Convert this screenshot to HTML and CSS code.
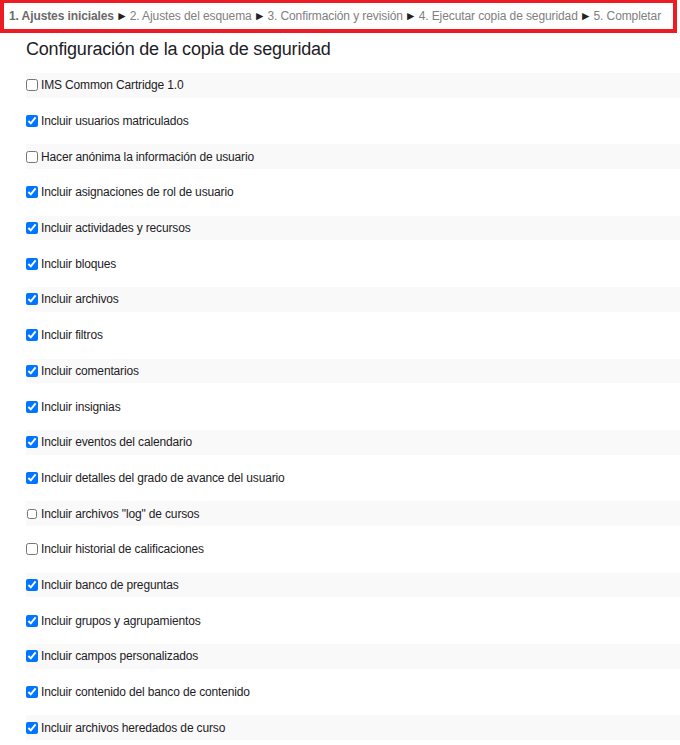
FILE: index.html
```html
<!DOCTYPE html>
<html lang="es">
<head>
<meta charset="utf-8">
<title>Copia de seguridad</title>
<link rel="stylesheet" href="styles.css">
</head>
<body>
<nav class="steps">
  <span class="step current">1. Ajustes iniciales</span>
  <span class="sep">►</span>
  <span class="step">2. Ajustes del esquema</span>
  <span class="sep">►</span>
  <span class="step">3. Confirmación y revisión</span>
  <span class="sep">►</span>
  <span class="step">4. Ejecutar copia de seguridad</span>
  <span class="sep">►</span>
  <span class="step">5. Completar</span>
</nav>
<main class="content">
  <h2 class="title">Configuración de la copia de seguridad</h2>
  <div class="settings">
    <label class="row"><input type="checkbox"><span>IMS Common Cartridge 1.0</span></label>
    <label class="row"><input type="checkbox" checked><span>Incluir usuarios matriculados</span></label>
    <label class="row"><input type="checkbox"><span>Hacer anónima la información de usuario</span></label>
    <label class="row"><input type="checkbox" checked><span>Incluir asignaciones de rol de usuario</span></label>
    <label class="row"><input type="checkbox" checked><span>Incluir actividades y recursos</span></label>
    <label class="row"><input type="checkbox" checked><span>Incluir bloques</span></label>
    <label class="row"><input type="checkbox" checked><span>Incluir archivos</span></label>
    <label class="row"><input type="checkbox" checked><span>Incluir filtros</span></label>
    <label class="row"><input type="checkbox" checked><span>Incluir comentarios</span></label>
    <label class="row"><input type="checkbox" checked><span>Incluir insignias</span></label>
    <label class="row"><input type="checkbox" checked><span>Incluir eventos del calendario</span></label>
    <label class="row"><input type="checkbox" checked><span>Incluir detalles del grado de avance del usuario</span></label>
    <label class="row"><input type="checkbox" class="small"><span>Incluir archivos "log" de cursos</span></label>
    <label class="row"><input type="checkbox"><span>Incluir historial de calificaciones</span></label>
    <label class="row"><input type="checkbox" checked><span>Incluir banco de preguntas</span></label>
    <label class="row"><input type="checkbox" checked><span>Incluir grupos y agrupamientos</span></label>
    <label class="row"><input type="checkbox" checked><span>Incluir campos personalizados</span></label>
    <label class="row"><input type="checkbox" checked><span>Incluir contenido del banco de contenido</span></label>
    <label class="row"><input type="checkbox" checked><span>Incluir archivos heredados de curso</span></label>
  </div>
</main>
</body>
</html>
```
FILE: styles.css
```css
html, body {
  margin: 0;
  padding: 0;
  background: #ffffff;
  font-family: "Liberation Sans", Arial, sans-serif;
}

.steps {
  box-sizing: border-box;
  width: 677px;
  height: 33px;
  border: 4px solid #ed1c24;
  border-top-width: 3px;
  padding: 0 0 0 5px;
  display: flex;
  align-items: center;
  gap: 2px;
  font-size: 12px;
  letter-spacing: -0.1px;
  color: #808080;
  white-space: nowrap;
}

.step.current {
  font-weight: bold;
  color: #6a6a6a;
}

.sep {
  color: #222222;
  font-size: 12px;
}

.content {
  padding: 4px 0 0 26px;
}

.title {
  margin: 0 0 12px 0;
  font-size: 18px;
  letter-spacing: -0.2px;
  font-weight: normal;
  color: #1d2125;
  line-height: 24px;
}

.settings {
  display: flex;
  flex-direction: column;
  gap: 11px;
}

.row {
  display: flex;
  align-items: center;
  height: 24.7px;
  font-size: 12px;
  letter-spacing: -0.15px;
  color: #1d2125;
}

.row:nth-child(odd) {
  background: #f9f9f9;
}

.row input {
  width: 12px;
  height: 12px;
  margin: 0 3px 0 0;
}

.row input.small {
  width: 10px;
  height: 10px;
  margin: 0 4px 0 1px;
}
```
